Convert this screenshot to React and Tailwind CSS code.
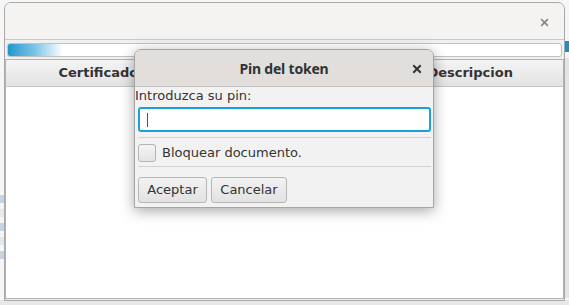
function CloseIcon({ className }) {
  return (
    <svg viewBox="0 0 10 10" className={className} fill="none" stroke="currentColor" strokeWidth="2" strokeLinecap="square">
      <path d="M2 2 L8 8 M8 2 L2 8" />
    </svg>
  );
}

function PinDialog() {
  return (
    <div className="absolute left-[134px] top-[49px] w-[300px] h-[159px] flex flex-col border border-[#a4a4a4] rounded-t-[7px] bg-[#f2f2f2] shadow-[0_3px_14px_rgba(0,0,0,0.35)] overflow-hidden">
      <div className="relative h-[37px] shrink-0 flex items-center justify-center bg-[#e1dedb] border-b border-[#c6c3c0]">
        <span className="font-['Noto_Sans'] font-bold text-[14px] tracking-[-0.2px] text-[#2e3436]">Pin del token</span>
        <CloseIcon className="absolute left-[277px] top-[14px] w-[10px] h-[10px] text-[#2e3436]" />
      </div>
      <div className="flex flex-col pl-[3px] pr-[2px] text-[13px] text-[#333] font-['DejaVu_Sans']">
        <div className="-ml-[3px] leading-[16px] pt-[1px]">Introduzca su pin:</div>
        <div className="mt-[3px] h-[25px] rounded-[3px] border-2 border-[#1ba1d9] bg-white flex items-center pl-[7px]">
          <div className="w-[1px] h-[14px] bg-[#555]" />
        </div>
        <div className="mt-[5px] h-[1px] bg-[#d2d2d2]" />
        <div className="mt-[6px] h-[18px] flex items-center gap-[6px]">
          <div className="w-[18px] h-[18px] rounded-[3px] border border-[#b4b4b4] bg-gradient-to-b from-[#f4f4f4] to-[#e4e4e4]" />
          <span className="leading-[16px]">Bloquear documento.</span>
        </div>
        <div className="mt-[4px] h-[1px] bg-[#d2d2d2]" />
        <div className="mt-[10px] flex gap-[4px]">
          <button className="h-[26px] w-[69px] rounded-[3px] border border-[#b6b6b6] bg-gradient-to-b from-[#f2f2f2] to-[#e2e2e2] leading-[16px]">Aceptar</button>
          <button className="h-[26px] w-[76px] rounded-[3px] border border-[#b6b6b6] bg-gradient-to-b from-[#f2f2f2] to-[#e2e2e2] leading-[16px]">Cancelar</button>
        </div>
      </div>
    </div>
  );
}

export default function App() {
  return (
    <div className="relative w-[569px] h-[305px] overflow-hidden bg-[#f6f6f6] font-['DejaVu_Sans']">
      {/* desktop behind */}
      <div className="absolute left-0 top-[195px] w-[5px] h-[70px] flex flex-col gap-[6px]">
        <div className="h-[8px] bg-[#c6d4e4]" />
        <div className="h-[8px] bg-[#e4e8ec]" />
        <div className="h-[8px] bg-[#c6d4e4]" />
        <div className="h-[8px] bg-[#e4e8ec]" />
        <div className="h-[8px] bg-[#c6d4e4]" />
      </div>
      <div className="absolute right-0 top-[41px] w-[5px] h-[11px] bg-[#1b8fc4]" />
      <div className="absolute right-0 top-[58px] w-[5px] h-[240px] bg-[#e4e4e4]" />
      <div className="absolute left-0 bottom-0 w-full h-[5px] bg-[#e8e8e8]" />

      {/* main window */}
      <div className="absolute left-[4px] top-[2px] w-[561px] h-[299px] flex flex-col border border-[#a8a8a8] rounded-t-[7px] bg-[#f0f0f0] overflow-hidden">
        <div className="relative h-[37px] shrink-0 bg-[#f4f3f2] border-b border-[#cac8c6]">
          <CloseIcon className="absolute right-[15px] top-[15px] w-[9px] h-[9px] text-[#8a8a8a]" />
        </div>
        <div className="px-[2px] pt-[3px] pb-[2px]">
          <div className="h-[14px] rounded-[3px] border border-[#c2c2c2] bg-white overflow-hidden">
            <div className="h-full w-[55px] bg-gradient-to-r from-[#1598cc] via-[#7cc6e6] to-[#ffffff]" />
          </div>
        </div>
        <div className="flex-1 flex flex-col mb-[1px] border border-[#b3b3b3] bg-white">
          <div className="h-[27px] shrink-0 grid grid-cols-3 bg-gradient-to-b from-[#f4f4f4] to-[#e3e3e3] border-b border-[#c4c4c4] font-bold text-[13px] text-[#333]">
            <div className="flex items-center justify-center border-r border-[#c8c8c8]">Certificado</div>
            <div className="flex items-center justify-center border-r border-[#c8c8c8]" />
            <div className="flex items-center justify-center">Descripcion</div>
          </div>
          <div className="flex-1 bg-white" />
        </div>
      </div>

      <PinDialog />
    </div>
  );
}
